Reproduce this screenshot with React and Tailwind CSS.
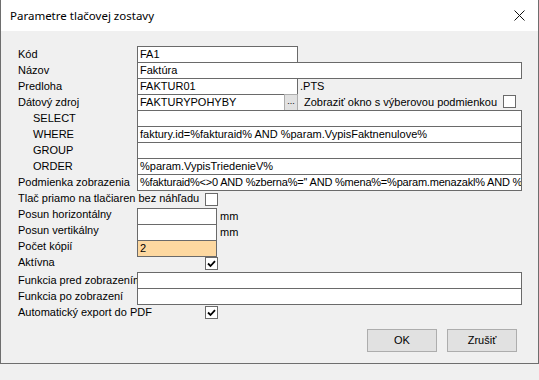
import React from 'react';

const Box = ({ w, children, className = '', bg = 'bg-white' }) => (
    <div
        className={`h-[17px] border border-[#6a6a6a] pl-[2px] leading-[15px] whitespace-nowrap overflow-hidden ${bg} ${w} ${className}`}
    >
        {children}
    </div>
);

const Check = ({ checked }) => (
    <div className="w-[13px] h-[13px] border border-[#6a6a6a] bg-white flex items-center justify-center">
        {checked && (
            <svg width="9" height="8" viewBox="0 0 9 8">
                <path d="M1 3.5 L3.5 6 L8 1.2" stroke="#000" strokeWidth="1.8" fill="none" />
            </svg>
        )}
    </div>
);

// one form line, 16px pitch like the original dialog
const Row = ({ label, sub, h = 'h-[16px]', children }) => (
    <div className={`flex items-start ${h}`}>
        <div className={`w-[119px] shrink-0 leading-[16px] whitespace-nowrap ${sub ? 'pl-[15px]' : ''}`}>{label}</div>
        {children}
    </div>
);

export default function App() {
    return (
        <div className="w-[539px] h-[380px] bg-[#f0f0f0] overflow-hidden">
            <div className="w-[539px] h-[364px] border-l border-r border-b border-[#6e6e6e] flex flex-col">
                {/* title bar */}
                <div className="h-[31px] bg-white flex items-center justify-between pl-[9px] pr-[13px] shrink-0">
                    <span className="text-[11.5px] text-black" style={{ fontFamily: '"Noto Sans", "Open Sans", sans-serif' }}>
                        Parametre tlačovej zostavy
                    </span>
                    <svg width="11" height="11" viewBox="0 0 11 11">
                        <path d="M0.5 0.5 L10.5 10.5 M10.5 0.5 L0.5 10.5" stroke="#111" strokeWidth="1" />
                    </svg>
                </div>

                <div
                    className="flex-1 pt-[15px] pl-[17px] text-[11px] text-black"
                    style={{ fontFamily: '"Liberation Sans", Arial, sans-serif' }}
                >
                    <Row label="Kód">
                        <Box w="w-[161px]">FA1</Box>
                    </Row>
                    <Row label="Názov">
                        <Box w="w-[385px]">Faktúra</Box>
                    </Row>
                    <Row label="Predloha">
                        <Box w="w-[161px]">FAKTUR01</Box>
                        <span className="pl-[2px] leading-[16px]">.PTS</span>
                    </Row>
                    <Row label="Dátový zdroj">
                        <Box w="w-[148px]">FAKTURYPOHYBY</Box>
                        <div className="w-[14px] h-[17px] border border-[#adadad] bg-[#e1e1e1] -ml-px text-[9px] leading-[12px] text-center">...</div>
                        <span className="pl-[6px] leading-[16px] w-[205px]">Zobraziť okno s výberovou podmienkou</span>
                        <div className="pt-[1px]">
                            <Check />
                        </div>
                    </Row>
                    <Row label="SELECT" sub>
                        <Box w="w-[385px]" />
                    </Row>
                    <Row label="WHERE" sub>
                        <Box w="w-[385px]">faktury.id=%fakturaid% AND %param.VypisFaktnenulove%</Box>
                    </Row>
                    <Row label="GROUP" sub>
                        <Box w="w-[385px]" />
                    </Row>
                    <Row label="ORDER" sub>
                        <Box w="w-[385px]">%param.VypisTriedenieV%</Box>
                    </Row>
                    <Row label="Podmienka zobrazenia">
                        <Box w="w-[385px]" className="tracking-[-0.2px]">%fakturaid%&lt;&gt;0 AND %zberna%='' AND %mena%=%param.menazakl% AND %pa</Box>
                    </Row>
                    <Row label="Tlač priamo na tlačiaren bez náhľadu">
                        <div className="ml-[68px] pt-[3px]">
                            <Check />
                        </div>
                    </Row>
                    <Row label="Posun horizontálny">
                        <Box w="w-[80px]" className="mt-[2px]" />
                        <span className="pl-[3px] pt-[2px] leading-[16px]">mm</span>
                    </Row>
                    <Row label="Posun vertikálny">
                        <Box w="w-[80px]" className="mt-[2px]" />
                        <span className="pl-[3px] pt-[2px] leading-[16px]">mm</span>
                    </Row>
                    <Row label="Počet kópií">
                        <Box w="w-[80px]" className="mt-[2px]" bg="bg-[#fdd8a0]">2</Box>
                    </Row>
                    <Row label="Aktívna" h="h-[18px]">
                        <div className="pl-[68px] pt-[3px]">
                            <Check checked />
                        </div>
                    </Row>
                    <Row label="Funkcia pred zobrazením">
                        <Box w="w-[385px]" />
                    </Row>
                    <Row label="Funkcia po zobrazení">
                        <Box w="w-[385px]" />
                    </Row>
                    <Row label="Automatický export do PDF">
                        <div className="pl-[68px] pt-[2px]">
                            <Check checked />
                        </div>
                    </Row>

                    <div className="flex justify-end gap-[10px] pr-[21px] mt-[9px]">
                        <button className="w-[70px] h-[23px] border border-[#adadad] bg-[#e1e1e1] text-[11px]">OK</button>
                        <button className="w-[70px] h-[23px] border border-[#adadad] bg-[#e1e1e1] text-[11px]">Zrušiť</button>
                    </div>
                </div>
            </div>
        </div>
    );
}
